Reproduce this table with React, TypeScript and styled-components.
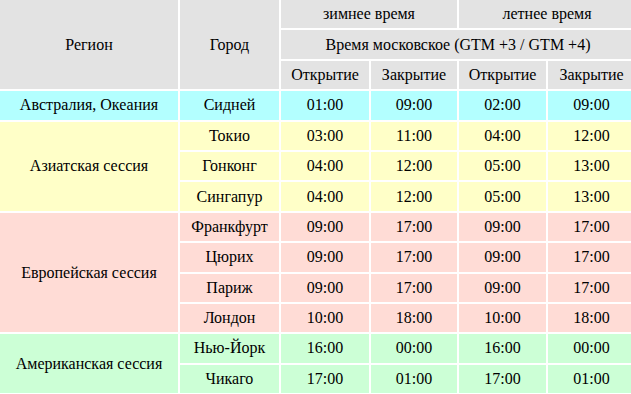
import React from 'react';
import styled, { createGlobalStyle } from 'styled-components';

const GlobalStyle = createGlobalStyle`
  html, body {
    margin: 0;
    padding: 0;
    background: #ffffff;
    overflow: hidden;
    font-family: 'Liberation Serif', serif;
  }
`;

const Table = styled.table`
  border-collapse: separate;
  border-spacing: 2px;
  margin: -2px 0 0 -2px;
  table-layout: fixed;
  width: 637px;
  color: #000;
`;

const Head = styled.th`
  background: #e3e3e3;
  font-family: 'Liberation Serif', serif;
  font-size: 16px;
  font-weight: normal;
  text-align: center;
  padding: 5px 4px;
  height: 18.4px;
  white-space: nowrap;
`;

type Tone = 'cyan' | 'yellow' | 'pink' | 'green';

const tones: Record<Tone, string> = {
  cyan: '#b3ffff',
  yellow: '#ffffc8',
  pink: '#ffdcd6',
  green: '#ccffd6',
};

const Cell = styled.td<{ $tone: Tone }>`
  background: ${(p) => tones[p.$tone]};
  font-family: 'Liberation Serif', serif;
  font-size: 16px;
  text-align: center;
  padding: 5px 4px;
  height: 18.4px;
  white-space: nowrap;
`;

interface ICity {
  name: string
  times: [string, string, string, string]
}

interface IRegion {
  name: string
  tone: Tone
  cities: ICity[]
}

const regions: IRegion[] = [
  {
    name: 'Австралия, Океания',
    tone: 'cyan',
    cities: [{ name: 'Сидней', times: ['01:00', '09:00', '02:00', '09:00'] }],
  },
  {
    name: 'Азиатская сессия',
    tone: 'yellow',
    cities: [
      { name: 'Токио', times: ['03:00', '11:00', '04:00', '12:00'] },
      { name: 'Гонконг', times: ['04:00', '12:00', '05:00', '13:00'] },
      { name: 'Сингапур', times: ['04:00', '12:00', '05:00', '13:00'] },
    ],
  },
  {
    name: 'Европейская сессия',
    tone: 'pink',
    cities: [
      { name: 'Франкфурт', times: ['09:00', '17:00', '09:00', '17:00'] },
      { name: 'Цюрих', times: ['09:00', '17:00', '09:00', '17:00'] },
      { name: 'Париж', times: ['09:00', '17:00', '09:00', '17:00'] },
      { name: 'Лондон', times: ['10:00', '18:00', '10:00', '18:00'] },
    ],
  },
  {
    name: 'Американская сессия',
    tone: 'green',
    cities: [
      { name: 'Нью-Йорк', times: ['16:00', '00:00', '16:00', '00:00'] },
      { name: 'Чикаго', times: ['17:00', '01:00', '17:00', '01:00'] },
    ],
  },
];

const App = () => (
  <>
    <GlobalStyle />
    <Table>
      <colgroup>
        <col style={{ width: 178 }} />
        <col style={{ width: 99 }} />
        <col style={{ width: 88 }} />
        <col style={{ width: 86 }} />
        <col style={{ width: 87 }} />
        <col style={{ width: 87 }} />
      </colgroup>
      <thead>
        <tr>
          <Head rowSpan={3}>Регион</Head>
          <Head rowSpan={3}>Город</Head>
          <Head colSpan={2}>зимнее время</Head>
          <Head colSpan={2}>летнее время</Head>
        </tr>
        <tr>
          <Head colSpan={4}>Время московское (GTM +3 / GTM +4)</Head>
        </tr>
        <tr>
          <Head>Открытие</Head>
          <Head>Закрытие</Head>
          <Head>Открытие</Head>
          <Head>Закрытие</Head>
        </tr>
      </thead>
      <tbody>
        {regions.map((region) =>
          region.cities.map((city, i) => (
            <tr key={city.name}>
              {i === 0 && (
                <Cell $tone={region.tone} rowSpan={region.cities.length}>
                  {region.name}
                </Cell>
              )}
              <Cell $tone={region.tone}>{city.name}</Cell>
              {city.times.map((t, j) => (
                <Cell $tone={region.tone} key={j}>{t}</Cell>
              ))}
            </tr>
          ))
        )}
      </tbody>
    </Table>
  </>
);

export default App;
